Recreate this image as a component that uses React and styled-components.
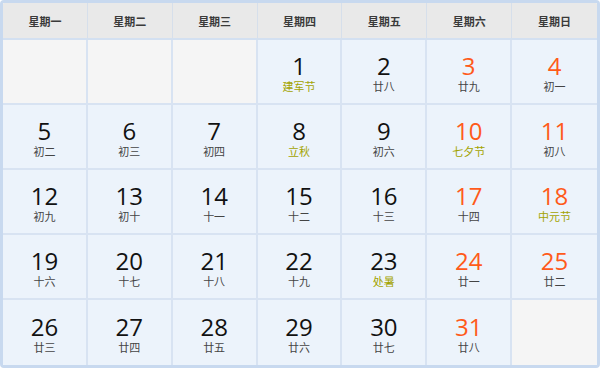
import React from "react";
import styled, { createGlobalStyle } from "styled-components";

const GlobalStyle = createGlobalStyle`
  html, body {
    margin: 0;
    padding: 0;
    background: #fff;
  }
`;

const Calendar = styled.div`
  box-sizing: border-box;
  width: 600px;
  height: 368px;
  border: 3px solid #c8d9ef;
  border-radius: 4px;
  display: grid;
  grid-template-columns: repeat(7, 1fr);
  grid-template-rows: 37px repeat(5, 1fr);
  background: #fff;
  overflow: hidden;
  font-family: "Noto Sans CJK SC", "Noto Sans", sans-serif;
`;

const HeadCell = styled.div`
  display: flex;
  align-items: center;
  justify-content: center;
  background: #e9e9e9;
  border-right: ${(p) => (p.last ? "none" : "1px solid #d6dfeb")};
  border-bottom: 2px solid #d3e0f1;
  font-size: 11px;
  font-weight: bold;
  color: #3a3a3a;
`;

const DayCell = styled.div`
  display: flex;
  flex-direction: column;
  align-items: center;
  justify-content: center;
  padding-top: 2px;
  background: ${(p) => (p.empty ? "#f5f5f5" : "#ecf3fb")};
  border-right: ${(p) => (p.last ? "none" : "2px solid #d8e3f2")};
  border-bottom: ${(p) => (p.bottom ? "none" : "2px solid #d8e3f2")};
`;

const DayNum = styled.div`
  font-family: "Open Sans", "Noto Sans", sans-serif;
  font-size: 24px;
  line-height: 27px;
  color: ${(p) => (p.weekend ? "#ff5a1a" : "#111")};
`;

const Lunar = styled.div`
  font-size: 11px;
  line-height: 14px;
  color: ${(p) => (p.festival ? "#a3a300" : "#444")};
`;

const weekdays = ["星期一", "星期二", "星期三", "星期四", "星期五", "星期六", "星期日"];

const days = [
  null, null, null,
  { d: 1, l: "建军节", f: true },
  { d: 2, l: "廿八" },
  { d: 3, l: "廿九" },
  { d: 4, l: "初一" },
  { d: 5, l: "初二" },
  { d: 6, l: "初三" },
  { d: 7, l: "初四" },
  { d: 8, l: "立秋", f: true },
  { d: 9, l: "初六" },
  { d: 10, l: "七夕节", f: true },
  { d: 11, l: "初八" },
  { d: 12, l: "初九" },
  { d: 13, l: "初十" },
  { d: 14, l: "十一" },
  { d: 15, l: "十二" },
  { d: 16, l: "十三" },
  { d: 17, l: "十四" },
  { d: 18, l: "中元节", f: true },
  { d: 19, l: "十六" },
  { d: 20, l: "十七" },
  { d: 21, l: "十八" },
  { d: 22, l: "十九" },
  { d: 23, l: "处暑", f: true },
  { d: 24, l: "廿一" },
  { d: 25, l: "廿二" },
  { d: 26, l: "廿三" },
  { d: 27, l: "廿四" },
  { d: 28, l: "廿五" },
  { d: 29, l: "廿六" },
  { d: 30, l: "廿七" },
  { d: 31, l: "廿八" },
  null,
];

export default function App() {
  return (
    <>
      <GlobalStyle />
      <Calendar>
        {weekdays.map((w, i) => (
          <HeadCell key={w} last={i === 6}>
            {w}
          </HeadCell>
        ))}
        {days.map((day, i) => {
          const col = i % 7;
          const last = col === 6;
          const bottom = i >= 28;
          if (!day) {
            return <DayCell key={i} empty last={last} bottom={bottom} />;
          }
          return (
            <DayCell key={i} last={last} bottom={bottom}>
              <DayNum weekend={col >= 5}>{day.d}</DayNum>
              <Lunar festival={day.f}>{day.l}</Lunar>
            </DayCell>
          );
        })}
      </Calendar>
    </>
  );
}
